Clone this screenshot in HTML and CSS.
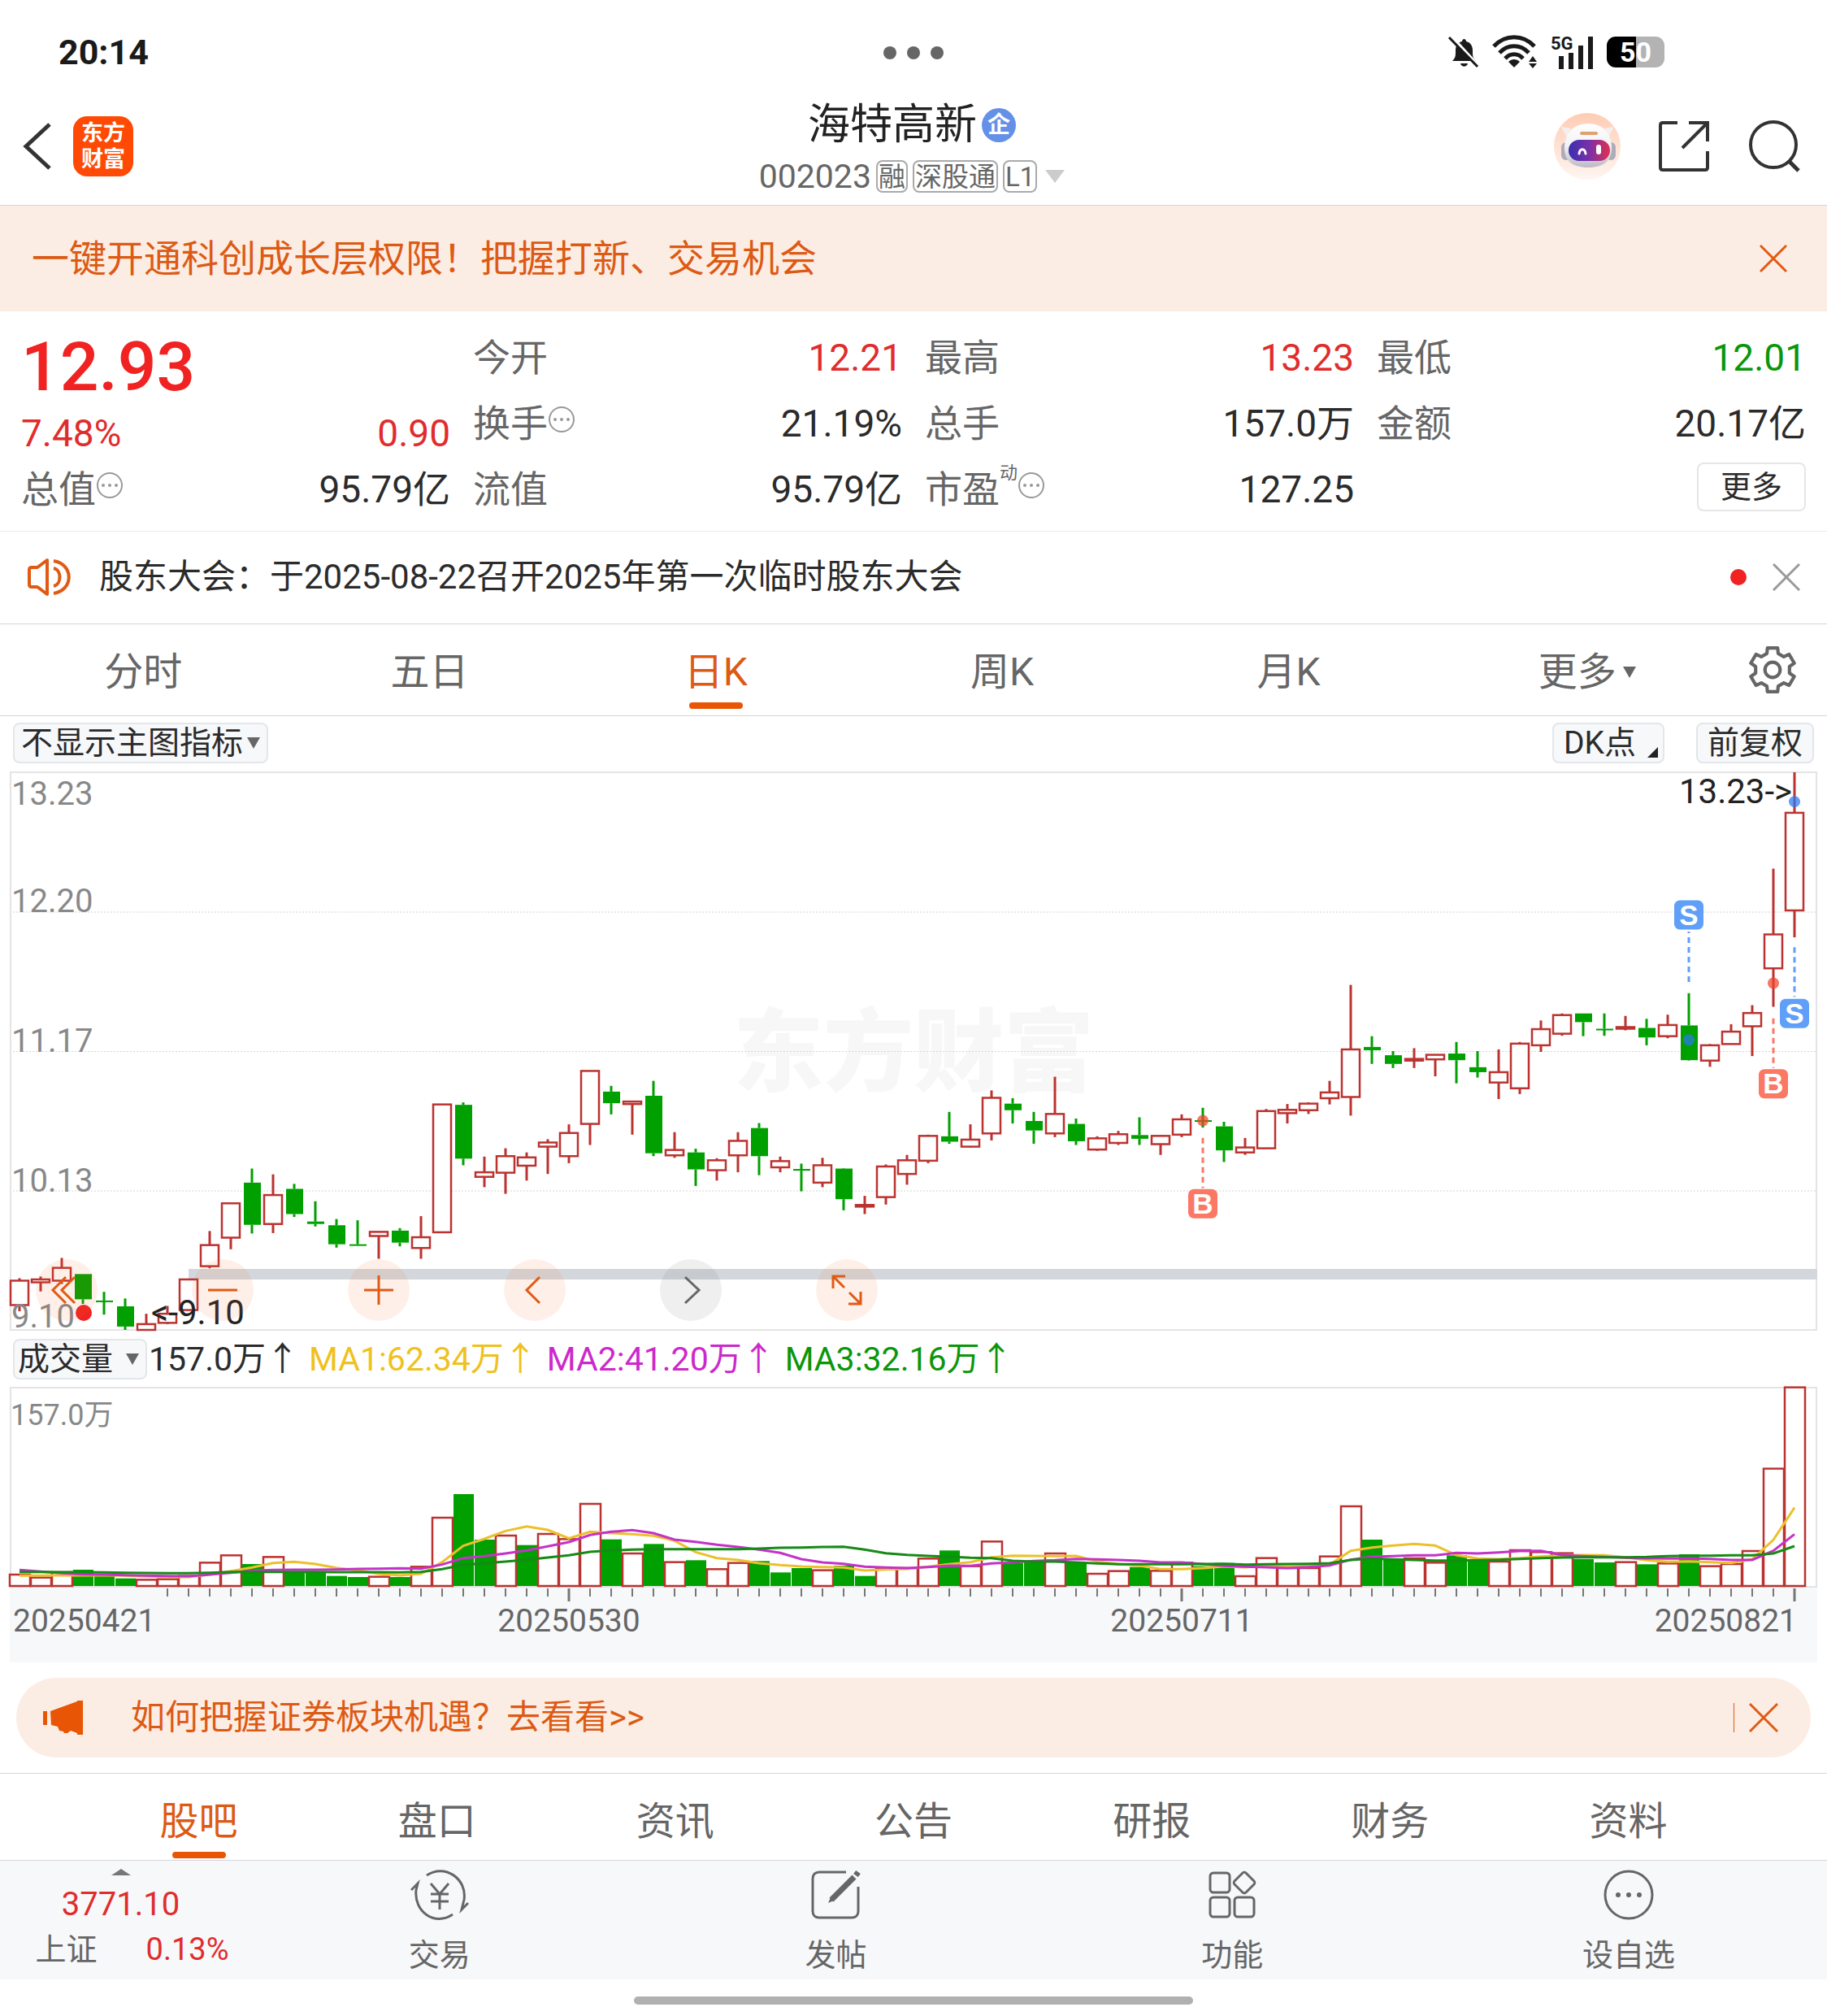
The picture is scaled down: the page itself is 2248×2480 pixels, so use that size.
FILE: index.html
```html
<!DOCTYPE html>
<html lang="zh-CN">
<head>
    <meta charset="UTF-8">
    <meta name="viewport" content="width=device-width, initial-scale=1.0">
    <title>海特高新 002023</title>
    <link rel="stylesheet" href="styles.css">
</head>
<body>

<div class="status-bar">
    <span class="status-time">20:14</span>
    <span class="status-dots"><i></i><i></i><i></i></span>
    <span class="status-icons">
        <svg width="40" height="40" viewBox="0 0 40 40">
            <path d="M6 31c4-4 4-6 4-13 0-6 3-10 8-11 0-4 5-4 5 0 5 1 8 5 8 11 0 7 0 9 4 13z" fill="#1a1a1a"/>
            <path d="M16 34h9c-1 5-8 5-9 0z" fill="#1a1a1a"/>
            <path d="M5 1l34 37" stroke="#fff" stroke-width="4"/>
            <path d="M2 2l35 36" stroke="#1a1a1a" stroke-width="3"/>
        </svg>
        <svg width="58" height="42" viewBox="0 0 58 42">
            <g fill="none" stroke="#1a1a1a" stroke-width="5">
                <path d="M3 14C17-1 39-1 53 14"/>
                <path d="M10 22c10-11 26-11 36 0"/>
                <path d="M17 29c6-7 16-7 22 0"/>
            </g>
            <path d="M28 40l-7-7c4-4 10-4 14 0z" fill="#1a1a1a"/>
            <path d="M51 26l5 7H46zM51 41l5-6H46z" fill="#1a1a1a"/>
        </svg>
        <svg width="56" height="46" viewBox="0 0 56 46">
            <text class="net" x="1" y="20">5G</text>
            <path d="M14 28v16M26 24v20M38 15v29M50 4v40" stroke="#1a1a1a" stroke-width="6" stroke-linecap="butt"/>
        </svg>
        <span class="battery">50</span>
    </span>
</div>

<header class="top">
    <div class="top-left">
        <button class="icon-btn" aria-label="返回">
            <svg width="36" height="60" viewBox="0 0 36 60"><path d="M33 3L4 30l29 27" fill="none" stroke="#333" stroke-width="5"/></svg>
        </button>
        <a href="#" class="logo">东方<br>财富</a>
    </div>
    <div class="top-title">
        <h1>海特高新<span class="qi">企</span></h1>
        <div class="code">
            <span>002023</span>
            <span class="tag">融</span>
            <span class="tag">深股通</span>
            <span class="tag">L1</span>
            <i class="tri-down"></i>
        </div>
    </div>
    <div class="top-right">
        <button class="icon-btn" aria-label="智能助手">
            <svg width="82" height="82" viewBox="0 0 82 82">
                <defs>
                    <linearGradient id="halo" x1="0" y1="0" x2="0" y2="1"><stop offset="0" stop-color="#ffccb3"/><stop offset="1" stop-color="#fff6f2"/></linearGradient>
                    <linearGradient id="visor" x1="0" y1="0" x2="1" y2="0"><stop offset="0" stop-color="#3a2fb0"/><stop offset=".5" stop-color="#7a30a8"/><stop offset="1" stop-color="#e03050"/></linearGradient>
                    <linearGradient id="helmet" x1="0" y1="0" x2="0" y2="1"><stop offset="0" stop-color="#fff"/><stop offset=".5" stop-color="#f3f1f4"/><stop offset="1" stop-color="#bdbac6"/></linearGradient>
                </defs>
                <circle cx="41" cy="41" r="41" fill="url(#halo)"/>
                <path d="M9 17l12 2-5 11zM74 17l-12 2 5 11z" fill="#f3efef"/>
                <rect x="9" y="36" width="12" height="22" rx="6" fill="#aeabba"/>
                <rect x="64" y="36" width="12" height="22" rx="6" fill="#aeabba"/>
                <path d="M42 13c18 0 28 12 29 28 1 17-9 26-29 26S12 58 13 41c1-16 11-28 29-28z" fill="url(#helmet)"/>
                <rect x="32" y="23" width="22" height="4" rx="2" fill="#e0a070"/>
                <rect x="18" y="33" width="51" height="26" rx="13" fill="url(#visor)"/>
                <path d="M31 50c1-7 7-7 8 0" fill="none" stroke="#fff" stroke-width="3" stroke-linecap="round"/>
                <rect x="52" y="39" width="6" height="12" rx="3" fill="#fff"/>
            </svg>
        </button>
        <button class="icon-btn" aria-label="分享">
            <svg width="64" height="64" viewBox="0 0 64 64"><path d="M24 3H6c-2 0-3 1-3 3v52c0 2 1 3 3 3h52c2 0 3-1 3-3V38M38 3h23v23M61 3L30 34" fill="none" stroke="#333" stroke-width="4"/></svg>
        </button>
        <button class="icon-btn" aria-label="搜索">
            <svg width="66" height="66" viewBox="0 0 66 66"><circle cx="32" cy="31" r="28" fill="none" stroke="#333" stroke-width="4"/><path d="M51 51l12 12" stroke="#333" stroke-width="5"/></svg>
        </button>
    </div>
</header>

<div class="promo">
    <a href="#">一键开通科创成长层权限！把握打新、交易机会</a>
    <button class="icon-btn" aria-label="关闭">
        <svg width="34" height="34" viewBox="0 0 34 34"><path d="M1 1l32 32M33 1L1 33" stroke="#e05a14" stroke-width="3"/></svg>
    </button>
</div>

<section class="quote">
    <div class="quote-col">
        <div class="price">12.93</div>
        <div class="change up"><span>7.48%</span><span>0.90</span></div>
        <div class="cell"><span class="name">总值<svg class="dots" viewBox="0 0 34 34"><use href="#more-dots"/></svg></span><span>95.79亿</span></div>
    </div>
    <div class="quote-col">
        <div class="cell"><span class="name">今开</span><span class="up">12.21</span></div>
        <div class="cell"><span class="name">换手<svg class="dots" viewBox="0 0 34 34"><use href="#more-dots"/></svg></span><span>21.19%</span></div>
        <div class="cell"><span class="name">流值</span><span>95.79亿</span></div>
    </div>
    <div class="quote-col">
        <div class="cell"><span class="name">最高</span><span class="up">13.23</span></div>
        <div class="cell"><span class="name">总手</span><span>157.0万</span></div>
        <div class="cell"><span class="name">市盈<sup>动</sup><svg class="dots" viewBox="0 0 34 34"><use href="#more-dots"/></svg></span><span>127.25</span></div>
    </div>
    <div class="quote-col">
        <div class="cell"><span class="name">最低</span><span class="down">12.01</span></div>
        <div class="cell"><span class="name">金额</span><span>20.17亿</span></div>
        <div class="cell cell-end"><button class="more-btn">更多</button></div>
    </div>
</section>

<svg class="sprite" aria-hidden="true">
    <symbol id="more-dots" viewBox="0 0 34 34">
        <circle cx="17" cy="17" r="15" fill="none" stroke="#999" stroke-width="2"/>
        <g fill="#999"><circle cx="9" cy="17" r="2"/><circle cx="17" cy="17" r="2"/><circle cx="25" cy="17" r="2"/></g>
    </symbol>
</svg>

<div class="notice">
    <svg width="56" height="48" viewBox="0 0 56 48" fill="none" stroke="#e05a14" stroke-width="4">
        <path d="M25 3v42L13 36H6c-2 0-3-1-3-3V15c0-2 1-3 3-3h7z" stroke-linejoin="round"/>
        <path d="M33 13c10 2 10 20 0 22M33 4c25 4 25 36 0 40"/>
    </svg>
    <a href="#">股东大会：于2025-08-22召开2025年第一次临时股东大会</a>
    <i class="red-dot"></i>
    <button class="icon-btn" aria-label="关闭公告">
        <svg width="34" height="34" viewBox="0 0 34 34"><path d="M1 1l32 32M33 1L1 33" stroke="#999" stroke-width="3"/></svg>
    </button>
</div>

<nav class="period-tabs">
    <button>分时</button>
    <button>五日</button>
    <button class="active">日K</button>
    <button>周K</button>
    <button>月K</button>
    <button class="more">更多<i class="tri-small"></i></button>
    <button class="gear" aria-label="设置">
        <svg width="58" height="58" viewBox="0 0 56 56" fill="none" stroke="#666" stroke-width="4" stroke-linejoin="round">
            <path d="M21.3 8.6L21.9 2h12.2l.6 6.6 6.7 3.9 6.3-2.9 6.1 10.5-5.7 4v7.8l5.7 4-6.1 10.5-6.3-2.9-6.7 3.9-.6 6.6H21.9l-.6-6.6-6.7-3.9-6.3 2.9L2.2 35.9l5.7-4v-7.8l-5.7-4L8.3 9.6l6.3 2.9z"/>
            <circle cx="28" cy="28" r="9"/>
        </svg>
    </button>
</nav>

<div class="chart-tools">
    <label class="picker">
        <select aria-label="主图指标"><option>不显示主图指标</option></select>
    </label>
    <div class="tools-right">
        <button class="tool dk">DK点</button>
        <button class="tool">前复权</button>
    </div>
</div>

<div class="kline">
    <svg id="kline" viewBox="0 0 2224 688"></svg>
    <div class="controls">
        <button aria-label="最早"><svg viewBox="0 0 76 76"><path d="M37 22L21 38l16 16M48 22L32 38l16 16"/></svg></button>
        <button aria-label="缩小"><svg viewBox="0 0 76 76"><path d="M20 38h36"/></svg></button>
        <button aria-label="放大"><svg viewBox="0 0 76 76"><path d="M20 38h36M38 20v36"/></svg></button>
        <button aria-label="左移"><svg viewBox="0 0 76 76"><path d="M44 22L28 38l16 16"/></svg></button>
        <button class="off" aria-label="右移"><svg viewBox="0 0 76 76"><path d="M31 22l17 16-17 16"/></svg></button>
        <button aria-label="全屏"><svg viewBox="0 0 76 76"><path d="M21 36V21h15M21 21l14 14M40 55h15V40M55 55L41 41"/></svg></button>
    </div>
</div>

<div class="vol-head">
    <label class="picker picker-vol">
        <select aria-label="副图指标"><option>成交量</option></select>
    </label>
    <span>157.0万↑</span>
    <span class="ma1">MA1:62.34万↑</span>
    <span class="ma2">MA2:41.20万↑</span>
    <span class="ma3">MA3:32.16万↑</span>
</div>

<div class="volume">
    <svg id="volume" viewBox="0 0 2224 340"></svg>
</div>

<div class="pill">
    <svg width="50" height="44" viewBox="0 0 50 44" fill="#e85505">
        <path d="M0 14h5v17H0zM9 14L42 2V1h7v42h-7v-2l-8-3-4 3h-4l-1-2-5-1-2-5-8-2z"/>
    </svg>
    <a href="#">如何把握证券板块机遇？去看看&gt;&gt;</a>
    <button class="icon-btn pill-close" aria-label="关闭推荐">
        <svg width="36" height="36" viewBox="0 0 36 36"><path d="M1 1l34 34M35 1L1 35" stroke="#e05a14" stroke-width="3"/></svg>
    </button>
</div>

<nav class="info-tabs">
    <button class="active">股吧</button>
    <button>盘口</button>
    <button>资讯</button>
    <button>公告</button>
    <button>研报</button>
    <button>财务</button>
    <button>资料</button>
</nav>

<footer class="bottom">
    <a href="#" class="index-box">
        <i class="tri-up"></i>
        <b>3771.10</b>
        <span class="index-row"><span>上证</span><span class="up">0.13%</span></span>
    </a>
    <a href="#" class="act">
        <svg width="72" height="64" viewBox="0 0 72 64" fill="none" stroke="#666" stroke-width="3">
            <path d="M20 8c22-15 50 4 46 30l-3 12 8-8M52 56C30 71 4 53 7 26l2-8-8 8"/>
            <path d="M25 18l11 13 11-13M25 31h22M25 40h22M36 31v19"/>
        </svg>
        交易
    </a>
    <a href="#" class="act">
        <svg width="64" height="64" viewBox="0 0 64 64" fill="none" stroke="#666" stroke-width="3">
            <path d="M44 4H11c-5 0-8 3-8 8v40c0 5 3 8 8 8h40c5 0 8-3 8-8V22"/>
            <path d="M54 10L26 38" stroke-width="7"/>
            <path d="M25 35l-3 7 7-3z" fill="#666" stroke="none"/>
            <path d="M56 8l3-4" stroke-width="7"/>
        </svg>
        发帖
    </a>
    <a href="#" class="act">
        <svg width="60" height="64" viewBox="0 0 60 64" fill="none" stroke="#666" stroke-width="3" stroke-linejoin="round">
            <rect x="3" y="5" width="24" height="24" rx="4"/>
            <rect x="3" y="35" width="24" height="24" rx="4"/>
            <rect x="33" y="35" width="24" height="24" rx="4"/>
            <path d="M43 5c1-1 3-1 4 0l10 10c1 1 1 3 0 4L47 29c-1 1-3 1-4 0L33 19c-1-1-1-3 0-4z"/>
        </svg>
        功能
    </a>
    <a href="#" class="act">
        <svg width="64" height="64" viewBox="0 0 64 64">
            <circle cx="32" cy="32" r="29" fill="none" stroke="#666" stroke-width="3"/>
            <g fill="#666"><circle cx="19" cy="32" r="3"/><circle cx="32" cy="32" r="3"/><circle cx="45" cy="32" r="3"/></g>
        </svg>
        设自选
    </a>
</footer>
<div class="home-bar"></div>

<script src="chart.js"></script>
</body>
</html>
```

FILE: styles.css
```css
* {
    box-sizing: border-box;
}

body {
    margin: 0;
    background: #fff;
    color: #2b2b2b;
    font-family: Roboto, "Noto Sans CJK SC", sans-serif;
    font-size: 46px;
    line-height: 56px;
}

a {
    color: inherit;
    text-decoration: none;
}

button,
select {
    font-family: inherit;
    line-height: inherit;
    color: inherit;
    cursor: pointer;
}

svg {
    display: block;
}

i {
    display: block;
}

.icon-btn {
    display: block;
    padding: 0;
    border: none;
    background: none;
}

.sprite {
    display: none;
}

.up {
    color: #e02c2c;
}

.down {
    color: #0a960a;
}

/* 状态栏 */
.status-bar {
    display: grid;
    grid-template-columns: 1fr auto 1fr;
    align-items: center;
    height: 116px;
    padding: 12px 200px 0 72px;
    position: relative;
}

.status-time {
    font-size: 43px;
    font-weight: 700;
    color: #1a1a1a;
}

.status-dots {
    position: absolute;
    left: 0;
    right: 0;
    top: 57px;
    display: flex;
    justify-content: center;
    gap: 13px;
}

.status-dots i {
    width: 16px;
    height: 16px;
    border-radius: 50%;
    background: #666;
}

.status-icons {
    grid-column: 3;
    display: flex;
    justify-content: flex-end;
    align-items: center;
    gap: 14px;
}

.net {
    font-size: 22px;
    font-weight: 700;
    fill: #1a1a1a;
}

.battery {
    width: 71px;
    height: 38px;
    border-radius: 11px;
    background: linear-gradient(90deg, #000 50%, #b3b3b3 50%);
    color: #fff;
    font-size: 34px;
    font-weight: 700;
    line-height: 38px;
    text-align: center;
}

/* 顶部标题 */
.top {
    display: grid;
    grid-template-columns: 1fr auto 1fr;
    align-items: center;
    height: 137px;
    padding: 5px 32px 5px 28px;
    border-bottom: 1px solid #d5d5d5;
}

.top-left,
.top-right {
    display: flex;
    align-items: center;
    padding-bottom: 8px;
}

.top-left {
    gap: 26px;
}

.top-right {
    justify-content: flex-end;
    gap: 46px;
}

.logo {
    width: 74px;
    height: 74px;
    padding: 5px 0;
    border-radius: 17px;
    background: #ff4a05;
    color: #fff;
    font-size: 27px;
    font-weight: 700;
    line-height: 32px;
    text-align: center;
}

.top-title h1 {
    display: flex;
    justify-content: center;
    align-items: center;
    gap: 6px;
    margin: 0;
    font-size: 52px;
    font-weight: 400;
    line-height: 66px;
    color: #222;
}

.qi {
    width: 42px;
    height: 42px;
    border-radius: 50%;
    background: #6490e8;
    color: #fff;
    font-size: 28px;
    font-weight: 700;
    line-height: 42px;
    text-align: center;
}

.code {
    display: flex;
    justify-content: center;
    align-items: center;
    gap: 6px;
    height: 60px;
    font-size: 41px;
    color: #666;
}

.tag {
    height: 40px;
    padding: 0 1px;
    border: 2px solid #aaa;
    border-radius: 8px;
    font-size: 33px;
    line-height: 38px;
}

.tri-down {
    margin-left: 4px;
    border: 12px solid transparent;
    border-top: 16px solid #ccc;
    border-bottom: 0;
}

/* 开通提示 */
.promo {
    display: flex;
    justify-content: space-between;
    align-items: center;
    height: 130px;
    padding: 0 49px 0 39px;
    background: #fcede4;
    color: #dc5a14;
}

/* 行情 */
.quote {
    display: grid;
    grid-template-columns: repeat(4, 1fr);
    gap: 28px;
    padding: 16px 26px 11px;
    border-bottom: 1px solid #ececec;
}

.price {
    font-size: 84px;
    font-weight: 500;
    line-height: 106px;
    color: #f02222;
}

.change {
    display: flex;
    justify-content: space-between;
    line-height: 56px;
}

.cell {
    display: flex;
    justify-content: space-between;
    align-items: center;
    height: 81px;
}

.cell-end {
    justify-content: flex-end;
}

.name {
    display: flex;
    align-items: center;
    color: #666;
}

.name sup {
    align-self: flex-start;
    font-size: 22px;
    line-height: 16px;
}

.dots {
    width: 34px;
    height: 34px;
    margin-bottom: 10px;
}

.more-btn {
    width: 134px;
    height: 60px;
    margin-bottom: 6px;
    padding: 0;
    border: 2px solid #e6e6e6;
    border-radius: 8px;
    background: #fff;
    font-size: 38px;
}

/* 公告 */
.notice {
    display: flex;
    align-items: center;
    height: 114px;
    padding: 0 33px 2px;
    border-bottom: 1px solid #d5d5d5;
    font-size: 42px;
}

.notice a {
    flex: 1;
    padding-left: 33px;
}

.red-dot {
    width: 20px;
    height: 20px;
    margin-right: 32px;
    border-radius: 50%;
    background: #f02222;
}

/* 周期与资料页签 */
.period-tabs,
.info-tabs {
    display: grid;
    border-bottom: 1px solid #d5d5d5;
}

.period-tabs {
    grid-template-columns: repeat(6, 1fr) 134px;
    height: 113px;
}

.info-tabs {
    grid-template-columns: repeat(7, 1fr);
    height: 108px;
    padding: 0 98px;
    border-top: 1px solid #d5d5dc;
    border-bottom-color: #d5d5dc;
}

.period-tabs button,
.info-tabs button {
    display: flex;
    justify-content: center;
    align-items: center;
    position: relative;
    padding: 6px 0 0;
    border: none;
    background: none;
    color: #666;
    font-size: 48px;
}

.info-tabs button {
    padding-top: 12px;
}

.period-tabs .more {
    padding-left: 30px;
}

.period-tabs .gear {
    padding-top: 0;
}

.period-tabs .active,
.info-tabs .active {
    color: #dc5a14;
}

.period-tabs .active::after,
.info-tabs .active::after {
    content: "";
    position: absolute;
    bottom: 8px;
    width: 66px;
    height: 8px;
    border-radius: 4px;
    background: #e85505;
}

.info-tabs .active::after {
    bottom: 2px;
}

.tri-small {
    margin-left: 8px;
    border: 8px solid transparent;
    border-top: 14px solid #666;
    border-bottom: 0;
}

/* 图表工具条 */
.chart-tools {
    display: flex;
    justify-content: space-between;
    height: 68px;
    padding: 8px 16px;
}

.tools-right {
    display: flex;
    gap: 39px;
}

.picker {
    position: relative;
}

.picker select,
.tool {
    height: 50px;
    border: 2px solid #e3e6ea;
    border-radius: 8px;
    background: #f7f8fa;
    font-size: 39px;
    line-height: 46px;
}

.picker select {
    display: block;
    appearance: none;
    padding: 0 28px 0 8px;
}

.picker::after {
    content: "";
    position: absolute;
    right: 10px;
    top: 18px;
    border: 8px solid transparent;
    border-top: 14px solid #666;
    border-bottom: 0;
    pointer-events: none;
}

.tool {
    position: relative;
    padding: 0 12px;
}

.dk {
    padding: 0 33px 0 12px;
}

.dk::after {
    content: "";
    position: absolute;
    right: 6px;
    bottom: 5px;
    border-left: 13px solid transparent;
    border-bottom: 13px solid #222;
}

/* K线 */
.kline {
    position: relative;
    margin: 0 12px;
}

.kline svg,
.volume svg {
    width: 100%;
    overflow: visible;
}

.controls {
    position: absolute;
    left: 32px;
    bottom: 12px;
    display: flex;
    gap: 116px;
}

.controls button {
    width: 76px;
    height: 76px;
    padding: 0;
    border: none;
    border-radius: 50%;
    background: rgba(245, 110, 40, 0.1);
}

.controls .off {
    background: rgba(100, 100, 100, 0.1);
}

.controls path {
    fill: none;
    stroke: #e05a14;
    stroke-width: 3;
}

.controls .off path {
    stroke: #666;
}

.axis-label {
    font-size: 40px;
    fill: #888;
}

.mark-label {
    font-size: 42px;
    fill: #222;
}

.vol-label {
    font-size: 36px;
    fill: #888;
}

.date-label {
    font-size: 39px;
    fill: #666;
}

.watermark {
    font-family: "Noto Sans CJK SC", sans-serif;
    font-size: 111px;
    font-weight: 900;
    fill: #f7f7f7;
}

.badge {
    font-family: "Liberation Sans", sans-serif;
    font-size: 35px;
    font-weight: 700;
    fill: #fff;
}

/* 成交量 */
.vol-head {
    display: flex;
    align-items: center;
    gap: 12px;
    height: 69px;
    padding-left: 16px;
    font-size: 41px;
}

.picker-vol {
    margin-right: -10px;
}

.picker-vol select {
    padding: 0 39px 0 4px;
}

.ma1 {
    color: #efc120;
}

.ma2 {
    color: #cc28cc;
}

.ma3 {
    color: #0a960a;
}

.volume {
    margin: 0 12px;
}

/* 推荐条 */
.pill {
    display: flex;
    align-items: center;
    height: 98px;
    margin: 18px 20px 19px;
    padding: 0 40px 0 33px;
    border-radius: 49px;
    background: #fcede4;
    color: #dc5a14;
    font-size: 42px;
}

.pill a {
    flex: 1;
    padding-left: 58px;
}

.pill-close {
    padding-left: 18px;
    border-left: 1px solid #e05a14;
}

/* 底部栏 */
.bottom {
    display: flex;
    height: 146px;
    background: #f7f8fa;
    color: #666;
    font-size: 38px;
}

.index-box {
    display: flex;
    flex-direction: column;
    align-items: center;
    width: 297px;
    padding-top: 10px;
}

.index-box b {
    margin-top: 8px;
    font-size: 40px;
    font-weight: 400;
    line-height: 56px;
    color: #e02c2c;
}

.index-row {
    display: flex;
    gap: 60px;
    padding-left: 28px;
    line-height: 54px;
}

.tri-up {
    border: 12px solid transparent;
    border-bottom: 8px solid #777;
    border-top: 0;
}

.act {
    display: flex;
    flex: 1;
    flex-direction: column;
    align-items: center;
    gap: 14px;
    padding-top: 10px;
    line-height: 56px;
}

.home-bar {
    width: 688px;
    height: 10px;
    margin: 21px auto 14px;
    border-radius: 5px;
    background: #b0b0b0;
}
```

FILE: chart.js
```js
// 颜色, 最高, 实体上沿, 实体下沿, 最低, 量柱顶, 量柱颜色(与K线不同时)
const days = [
    ['r', 1378, 1384, 1443, 1458, 921], ['r', 1374, 1381, 1388, 1410, 932],
    ['r', 1329, 1353, 1384, 1392, 912], ['g', 1368, 1368, 1429, 1440, 903],
    ['g', 1411, 1432, 1434, 1466, 921], ['g', 1427, 1446, 1495, 1503, 935],
    ['r', 1464, 1489, 1503, 1503, 940], ['r', 1445, 1464, 1486, 1489, 938],
    ['r', 1380, 1381, 1455, 1455, 926], ['r', 1264, 1298, 1349, 1354, 877],
    ['r', 1195, 1197, 1280, 1308, 850], ['g', 1113, 1147, 1249, 1270, 882],
    ['r', 1127, 1177, 1247, 1269, 856], ['g', 1150, 1162, 1223, 1230, 910],
    ['g', 1192, 1241, 1247, 1253, 912], ['g', 1235, 1250, 1296, 1304, 926],
    ['g', 1238, 1296, 1298, 1298, 930], ['r', 1265, 1266, 1276, 1331, 929],
    ['g', 1257, 1263, 1292, 1301, 930], ['r', 1228, 1279, 1305, 1331, 892],
    ['r', 958, 958, 1267, 1267, 711], ['g', 953, 959, 1089, 1105, 624],
    ['r', 1084, 1122, 1133, 1158, 792, 'g'], ['r', 1064, 1083, 1123, 1174, 777],
    ['r', 1074, 1086, 1106, 1142, 812, 'g'], ['r', 1042, 1050, 1060, 1126, 771],
    ['r', 1006, 1027, 1083, 1100, 790], ['r', 877, 877, 1005, 1056, 660],
    ['g', 913, 927, 955, 982, 791], ['r', 950, 951, 957, 1031, 843],
    ['g', 901, 937, 1076, 1083, 808], ['r', 1025, 1068, 1081, 1087, 875],
    ['g', 1065, 1074, 1115, 1155, 868], ['r', 1088, 1093, 1117, 1142, 901],
    ['r', 1025, 1046, 1081, 1122, 878], ['g', 1003, 1015, 1083, 1129, 871],
    ['r', 1084, 1095, 1110, 1122, 913, 'g'], ['g', 1101, 1114, 1118, 1168, 897],
    ['r', 1087, 1105, 1147, 1158, 905], ['g', 1112, 1113, 1187, 1214, 888],
    ['r', 1179, 1201, 1205, 1223, 926, 'g'], ['r', 1103, 1108, 1182, 1200, 900],
    ['r', 1080, 1093, 1126, 1152, 897], ['r', 1031, 1034, 1094, 1100, 862],
    ['g', 976, 1035, 1048, 1053, 832], ['r', 1006, 1043, 1060, 1062, 890],
    ['r', 924, 942, 1028, 1045, 799], ['g', 943, 956, 972, 1004, 878],
    ['g', 976, 998, 1021, 1053, 872], ['r', 891, 981, 1028, 1037, 843],
    ['g', 992, 1005, 1047, 1056, 876], ['r', 1035, 1040, 1067, 1070, 918],
    ['r', 1022, 1030, 1051, 1056, 908], ['g', 989, 1032, 1041, 1056, 893],
    ['r', 1032, 1034, 1054, 1080, 907], ['r', 982, 994, 1031, 1037, 877],
    ['g', 966, 996, 1000, 1014, 890], ['g', 1000, 1011, 1069, 1097, 878],
    ['r', 1039, 1062, 1074, 1080, 927], ['r', 969, 974, 1064, 1065, 860],
    ['r', 957, 971, 979, 1004, 897], ['r', 953, 956, 972, 981, 897],
    ['r', 901, 929, 943, 958, 854], ['r', 669, 825, 940, 985, 669],
    ['g', 793, 819, 827, 860, 792], ['g', 829, 839, 860, 870, 862],
    ['r', 822, 848, 852, 870, 861], ['r', 837, 838, 849, 890, 877],
    ['g', 807, 835, 851, 907, 850], ['g', 829, 868, 880, 893, 868],
    ['r', 825, 880, 905, 945, 873], ['r', 807, 811, 919, 933, 831],
    ['r', 755, 776, 815, 831, 838], ['r', 738, 742, 787, 792, 842],
    ['g', 738, 738, 759, 793, 864], ['g', 738, 775, 777, 792, 876],
    ['r', 744, 771, 774, 779, 875], ['g', 751, 773, 796, 815, 883],
    ['r', 741, 766, 793, 798, 880], ['g', 689, 767, 851, 852, 846],
    ['r', 812, 815, 852, 867, 890], ['r', 764, 782, 812, 813, 882],
    ['r', 718, 737, 769, 841, 834], ['r', 388, 547, 629, 722, 530],
    ['r', 155, 253, 489, 554, 230]
];

const ma1 = [925, 925, 923, 924, 924, 925, 928, 930, 930, 921, 908, 895, 878, 874, 882, 896, 905, 918, 924, 918, 875,
    815, 789, 760, 743, 756, 787, 763, 768, 772, 778, 796, 838, 860, 867, 879, 886, 891, 893, 895, 906, 902, 900, 892,
    883, 875, 857, 851, 852, 853, 852, 872, 882, 888, 901, 901, 897, 891, 894, 889, 891, 889, 884, 833, 821, 814, 808,
    814, 849, 862, 864, 860, 854, 850, 849, 850, 857, 868, 874, 872, 875, 878, 864, 793, 674];
const ma2 = [904, 910, 916, 920, 921, 923, 925, 926, 927, 921, 914, 907, 904, 903, 903, 902, 900, 899, 898, 899, 884,
    860, 853, 843, 832, 817, 801, 775, 763, 757, 768, 792, 800, 811, 819, 829, 841, 864, 876, 881, 892, 895, 897, 893,
    888, 889, 880, 876, 871, 868, 863, 865, 867, 870, 876, 876, 882, 889, 892, 894, 897, 893, 887, 866, 855, 853, 850,
    850, 841, 843, 839, 834, 833, 849, 853, 856, 859, 861, 862, 861, 863, 867, 867, 833, 772];
const ma3 = [911, 911, 912, 912, 913, 914, 915, 916, 916, 914, 911, 911, 911, 911, 911, 912, 912, 912, 913, 911, 901,
    885, 879, 873, 866, 858, 850, 837, 832, 829, 827, 827, 827, 827, 827, 825, 822, 821, 819, 818, 829, 842, 848, 852,
    855, 859, 860, 870, 873, 873, 876, 880, 883, 883, 883, 883, 882, 881, 884, 883, 882, 881, 879, 867, 862, 865, 867,
    869, 869, 868, 866, 863, 860, 858, 857, 857, 857, 856, 853, 851, 851, 850, 850, 843, 816];

const RED = '#bb3330';
const GREEN = '#00a000';
const x = i => 12 + 26 * i;
const y = v => (v - 155) / 1348 * 686 + 1;   // 155 = 13.23, 1503 = 9.10
const vy = v => (v - 228) / 3;

function rect(x, y, w, h, attrs) {
    return `<rect x="${x}" y="${y}" width="${w}" height="${h}" ${attrs}/>`;
}

function line(x1, y1, x2, y2, attrs) {
    return `<line x1="${x1}" y1="${y1}" x2="${x2}" y2="${y2}" ${attrs}/>`;
}

function text(x, y, cls, str, anchor = 'start') {
    return `<text x="${x}" y="${y}" class="${cls}" text-anchor="${anchor}">${str}</text>`;
}

// 买卖点: 圆点, 虚线, 标记
function mark(i, letter, dot, from, to, badge) {
    const color = letter === 'B' ? '#fa7864' : '#5f9ff8';
    return `<circle cx="${x(i)}" cy="${y(dot)}" r="7" fill="${letter === 'B' ? '#f0442a' : '#2878f0'}" opacity=".72"/>`
        + line(x(i), y(from), x(i), y(to), `stroke="${color}" stroke-width="3" stroke-dasharray="7 5"`)
        + rect(x(i) - 18, y(badge) - 18, 36, 36, `rx="7" fill="${color}"`)
        + text(x(i), y(badge) + 12, 'badge', letter, 'middle');
}

function drawKline() {
    let s = text(1112, 385, 'watermark', '东方财富', 'middle');
    [493, 830, 1167].forEach(v => {
        s += line(0, y(v), 2224, y(v), 'stroke="#d4d4d4" stroke-width="1" stroke-dasharray="2 2"');
    });
    s += rect(1, 1, 2222, 686, 'fill="none" stroke="#e4e4e4" stroke-width="2"');
    s += rect(220, 612, 2004, 13, 'fill="#d3d7dc"');
    days.forEach(([c, high, top, bottom, low], i) => {
        const color = c === 'g' ? GREEN : RED;
        const h = Math.max(y(bottom) - y(top), 2);
        s += line(x(i), y(high), x(i), y(top), `stroke="${color}" stroke-width="3"`);
        s += line(x(i), y(bottom), x(i), y(low), `stroke="${color}" stroke-width="3"`);
        s += c === 'g' ? rect(x(i) - 10, y(top), 21, h, `fill="${color}"`)
            : rect(x(i) - 11, y(top), 22, h, `fill="#fff" stroke="${color}" stroke-width="2.5"`);
    });
    s += text(2, 41, 'axis-label', '13.23') + text(2, 173, 'axis-label', '12.20')
        + text(2, 345, 'axis-label', '11.17') + text(2, 517, 'axis-label', '10.13')
        + text(2, 684, 'axis-label', '9.10');
    s += '<circle cx="91" cy="666" r="10" fill="#f02222"/>';
    s += text(174, 680, 'mark-label', '&lt;-9.10') + text(2193, 39, 'mark-label', '13.23-&gt;', 'end');
    s += mark(56, 'B', 997, 1039, 1160, 1198) + mark(79, 'S', 802, 662, 540, 500)
        + mark(83, 'B', 665, 750, 870, 908) + mark(84, 'S', 226, 578, 698, 738);
    document.getElementById('kline').innerHTML = s;
}

function drawVolume() {
    let s = rect(0, 247, 2224, 92, 'fill="#f7f8fa"');
    s += rect(1, 1, 2222, 245, 'fill="none" stroke="#e4e4e4" stroke-width="2"');
    days.forEach(([c, , , , , v, volColor], i) => {
        const h = 245 - vy(v);
        s += (volColor || c) === 'g' ? rect(x(i) - 12, vy(v), 25, h, `fill="${GREEN}"`)
            : rect(x(i) - 12, vy(v), 25, h, `fill="#fff" stroke="${RED}" stroke-width="2.5"`);
    });
    [[ma1, '#ecc02c'], [ma2, '#c432c8'], [ma3, '#168a16']].forEach(([ma, color]) => {
        const points = ma.map((v, i) => x(i) + ',' + vy(v)).join(' ');
        s += `<polyline points="${points}" fill="none" stroke="${color}" stroke-width="3"/>`;
    });
    for (let i = 7; i < days.length; i++) {
        const major = [26, 55, 84].includes(i);
        s += line(x(i), 248, x(i), major ? 264 : 258, `stroke="#777" stroke-width="${major ? 3 : 2}"`);
    }
    s += text(1, 47, 'vol-label', '157.0万');
    s += text(4, 301, 'date-label', '20250421') + text(x(26), 301, 'date-label', '20250530', 'middle')
        + text(x(55), 301, 'date-label', '20250711', 'middle') + text(2199, 301, 'date-label', '20250821', 'end');
    document.getElementById('volume').innerHTML = s;
}

drawKline();
drawVolume();
```
